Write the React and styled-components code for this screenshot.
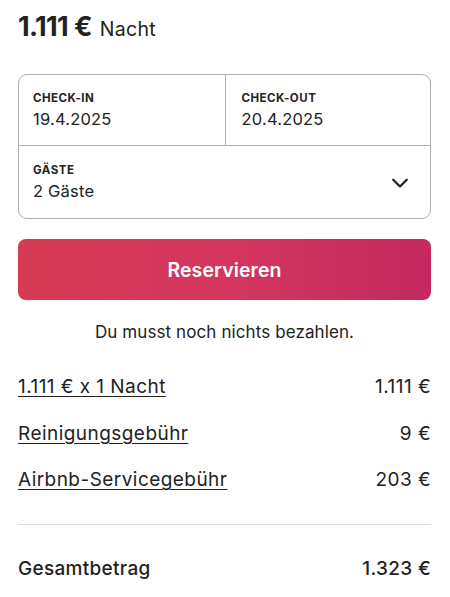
import React from "react";
import styled, { createGlobalStyle } from "styled-components";

const Global = createGlobalStyle`
  html, body { margin: 0; padding: 0; background: #fff; }
  body { font-family: Inter, "Noto Sans", sans-serif; color: #222; -webkit-font-smoothing: antialiased; }
`;

const Page = styled.div`
  width: 450px;
  box-sizing: border-box;
  padding: 9px 19px 0 18px;
`;

const PriceLine = styled.div`
  display: flex;
  align-items: baseline;
  gap: 8px;
  height: 36px;
  line-height: 36px;
`;

const Price = styled.span`
  font-size: 27px;
  font-weight: 700;
  letter-spacing: -0.6px;
  color: #222;
`;

const Per = styled.span`
  font-size: 19.5px;
  font-weight: 400;
  letter-spacing: 0.3px;
  color: #222;
`;

const Box = styled.div`
  margin-top: 29px;
  border: 1px solid #b0b0b0;
  border-radius: 9px;
  overflow: hidden;
`;

const DateRow = styled.div`
  display: grid;
  grid-template-columns: 1fr 1fr;
  border-bottom: 1px solid #b0b0b0;
  height: 70px;
`;

const Cell = styled.div`
  display: flex;
  flex-direction: column;
  justify-content: center;
  padding: 0 14px;
  border-left: ${(p) => (p.$divider ? "1px solid #b0b0b0" : "none")};
  padding-left: ${(p) => (p.$divider ? "16px" : "14px")};
`;

const Label = styled.div`
  font-size: 11.5px;
  font-weight: 650;
  letter-spacing: 0.5px;
  text-transform: uppercase;
  color: #222;
  line-height: 14px;
`;

const Value = styled.div`
  font-size: 16.5px;
  letter-spacing: 0.2px;
  color: #222;
  line-height: 22px;
  margin-top: 3px;
`;

const GuestRow = styled.div`
  display: flex;
  align-items: center;
  justify-content: space-between;
  height: 72px;
  padding: 0 21px 0 14px;
`;

const Button = styled.button`
  display: block;
  margin-top: 20px;
  width: 100%;
  height: 61px;
  border: none;
  border-radius: 8px;
  background: linear-gradient(to right, #d63a53 0%, #d4365f 50%, #c3295f 100%);
  color: #fff;
  font-family: inherit;
  font-size: 19.5px;
  font-weight: 600;
  letter-spacing: 0.1px;
  cursor: pointer;
`;

const Note = styled.div`
  margin-top: 21px;
  text-align: center;
  font-size: 17px;
  line-height: 22px;
  letter-spacing: 0.1px;
  color: #222;
`;

const Rows = styled.div`
  margin-top: 32px;
  display: flex;
  flex-direction: column;
  gap: 22.5px;
`;

const Row = styled.div`
  display: flex;
  justify-content: space-between;
  align-items: baseline;
  font-size: 19px;
  line-height: 24px;
  letter-spacing: 0.45px;
  color: #222;
`;

const Linked = styled.span`
  text-decoration: underline;
  text-underline-offset: 3px;
  text-decoration-thickness: 1px;
`;

const Divider = styled.hr`
  margin: 32px 0 0;
  border: none;
  border-top: 1px solid #dddddd;
`;

const Total = styled.div`
  margin-top: 32px;
  display: flex;
  justify-content: space-between;
  font-size: 19px;
  line-height: 24px;
  letter-spacing: 0.3px;
  font-weight: 500;
  color: #222;
`;

const Chevron = () => (
  <svg width="18" height="18" viewBox="0 0 32 32" fill="none" stroke="#222" strokeWidth="4" strokeLinecap="round" strokeLinejoin="round">
    <path d="M28 12 16 24 4 12" />
  </svg>
);

export default function App() {
  return (
    <>
      <Global />
      <Page>
        <PriceLine>
          <Price>1.111 €</Price>
          <Per>Nacht</Per>
        </PriceLine>
        <Box>
          <DateRow>
            <Cell>
              <Label>Check-in</Label>
              <Value>19.4.2025</Value>
            </Cell>
            <Cell $divider>
              <Label>Check-out</Label>
              <Value>20.4.2025</Value>
            </Cell>
          </DateRow>
          <GuestRow>
            <div>
              <Label>Gäste</Label>
              <Value>2 Gäste</Value>
            </div>
            <Chevron />
          </GuestRow>
        </Box>
        <Button>Reservieren</Button>
        <Note>Du musst noch nichts bezahlen.</Note>
        <Rows>
          <Row><Linked>1.111 € x 1 Nacht</Linked><span>1.111 €</span></Row>
          <Row><Linked>Reinigungsgebühr</Linked><span>9 €</span></Row>
          <Row><Linked>Airbnb-Servicegebühr</Linked><span>203 €</span></Row>
        </Rows>
        <Divider />
        <Total><span>Gesamtbetrag</span><span>1.323 €</span></Total>
      </Page>
    </>
  );
}
